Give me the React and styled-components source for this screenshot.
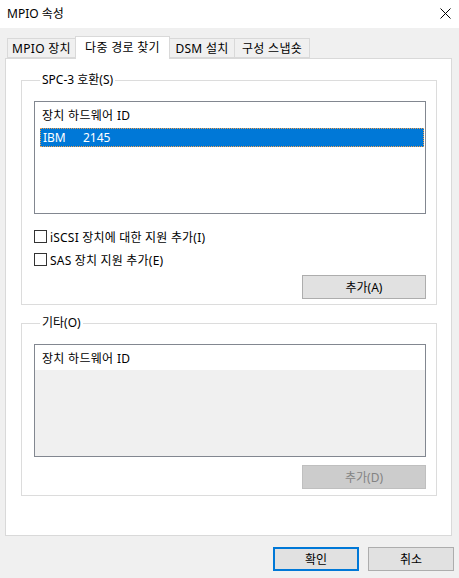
import styled, { createGlobalStyle } from 'styled-components';

const GlobalStyle = createGlobalStyle`
  html, body {
    margin: 0;
    padding: 0;
    background: #f0f0f0;
  }
  body {
    font-family: "Noto Sans", "Noto Sans CJK KR", sans-serif;
    font-size: 12px;
    color: #000;
  }
`;

const Window = styled.div`
  width: 459px;
  height: 578px;
  display: flex;
  flex-direction: column;
  background: #f0f0f0;
  overflow: hidden;
`;

const TitleBar = styled.div`
  height: 28px;
  flex: none;
  background: #fff;
  display: flex;
  align-items: center;
  justify-content: space-between;
  padding: 0 8px 2px 7px;
  box-sizing: border-box;
`;

const CloseIcon = () => (
  <svg width="11" height="11" viewBox="0 0 11 11">
    <path d="M0.5 0.5 L10.5 10.5 M10.5 0.5 L0.5 10.5" stroke="#000" strokeWidth="1" />
  </svg>
);

const TabStrip = styled.div`
  display: flex;
  align-items: flex-end;
  margin: 8px 0 0 7px;
  height: 22px;
  position: relative;
  z-index: 1;
`;

const Tab = styled.div`
  width: ${(p) => p.w}px;
  height: ${(p) => (p.active ? 23 : 20)}px;
  box-sizing: border-box;
  border: 1px solid #d9d9d9;
  border-bottom: ${(p) => (p.active ? 'none' : '1px solid #d9d9d9')};
  border-left: ${(p) => (p.first || p.active ? '1px solid #d9d9d9' : 'none')};
  border-right: ${(p) => (p.beforeActive ? 'none' : '1px solid #d9d9d9')};
  background: ${(p) => (p.active ? '#fff' : '#f0f0f0')};
  display: flex;
  align-items: center;
  justify-content: center;
  padding-bottom: ${(p) => (p.active ? 2 : 0)}px;
  margin-bottom: ${(p) => (p.active ? -1 : 0)}px;
  white-space: nowrap;
  letter-spacing: 0.3px;
`;

const Panel = styled.div`
  margin: 0 7px 0 5px;
  height: 478px;
  box-sizing: border-box;
  border: 1px solid #d9d9d9;
  background: #fff;
  padding: 14px 14px 0 15px;
`;

const Group = styled.fieldset`
  margin: 0 0 ${(p) => p.gap || 0}px 0;
  height: ${(p) => p.h}px;
  box-sizing: border-box;
  border: 1px solid #dcdcdc;
  padding: 0 10px 0 12px;
  display: flex;
  flex-direction: column;
  align-items: stretch;
`;

const Legend = styled.legend`
  padding: 0 2px;
  margin-left: 6px;
  line-height: 14px;
`;

const ListBox = styled.div`
  height: 113px;
  margin-top: 14px;
  box-sizing: border-box;
  border: 1px solid #828790;
  background: ${(p) => (p.disabled ? '#f0f0f0' : '#fff')};
  display: flex;
  flex-direction: column;
  padding: 0 1px;
`;

const ListHeader = styled.div`
  height: 25px;
  flex: none;
  background: #fff;
  display: flex;
  align-items: center;
  padding: 0 7px;
  margin: 0 -1px;
  letter-spacing: 0.3px;
`;

const SelectedRow = styled.div`
  height: 19px;
  margin: 1px 0 0 4px;
  background: #0078d7;
  color: #fff;
  display: flex;
  align-items: center;
  outline: 1px dotted #f0a050;
  outline-offset: -1px;
  padding-left: 3px;
`;

const Cell = styled.span`
  width: ${(p) => p.w}px;
`;

const CheckRow = styled.label`
  display: flex;
  align-items: center;
  gap: 3px;
  height: 13px;
  margin-top: ${(p) => p.top}px;
  letter-spacing: 0.2px;
`;

const Box = styled.span`
  width: 13px;
  height: 13px;
  box-sizing: border-box;
  border: 1px solid #333;
  background: #fff;
  flex: none;
`;

const ButtonRow = styled.div`
  display: flex;
  justify-content: flex-end;
  margin-top: ${(p) => p.top}px;
`;

const Button = styled.div`
  width: ${(p) => p.w || 124}px;
  height: 24px;
  box-sizing: border-box;
  border: 1px solid ${(p) => (p.disabled ? '#bfbfbf' : '#adadad')};
  background: ${(p) => (p.disabled ? '#cccccc' : '#e1e1e1')};
  color: ${(p) => (p.disabled ? '#838383' : '#000')};
  display: flex;
  align-items: center;
  justify-content: center;
`;

const DefaultButton = styled(Button)`
  border: 2px solid #0078d7;
`;

const Footer = styled.div`
  display: flex;
  justify-content: flex-end;
  gap: 9px;
  padding: 11px 5px 0 0;
`;

export default function App() {
  return (
    <Window>
      <GlobalStyle />
      <TitleBar>
        <span>MPIO 속성</span>
        <CloseIcon />
      </TitleBar>
      <TabStrip>
        <Tab w={68} first beforeActive>MPIO 장치</Tab>
        <Tab w={95} active>다중 경로 찾기</Tab>
        <Tab w={65}>DSM 설치</Tab>
        <Tab w={75}>구성 스냅숏</Tab>
      </TabStrip>
      <Panel>
        <Group h={232} gap={11}>
          <Legend>SPC-3 호환(S)</Legend>
          <ListBox>
            <ListHeader>장치 하드웨어 ID</ListHeader>
            <SelectedRow>
              <Cell w={40}>IBM</Cell>
              <Cell>2145</Cell>
            </SelectedRow>
          </ListBox>
          <CheckRow top={16}>
            <Box />
            iSCSI 장치에 대한 지원 추가(I)
          </CheckRow>
          <CheckRow top={10}>
            <Box />
            SAS 장치 지원 추가(E)
          </CheckRow>
          <ButtonRow top={9}>
            <Button>추가(A)</Button>
          </ButtonRow>
        </Group>
        <Group h={180}>
          <Legend>기타(O)</Legend>
          <ListBox disabled>
            <ListHeader>장치 하드웨어 ID</ListHeader>
          </ListBox>
          <ButtonRow top={8}>
            <Button disabled>추가(D)</Button>
          </ButtonRow>
        </Group>
      </Panel>
      <Footer>
        <DefaultButton w={86}>확인</DefaultButton>
        <Button w={86}>취소</Button>
      </Footer>
    </Window>
  );
}
